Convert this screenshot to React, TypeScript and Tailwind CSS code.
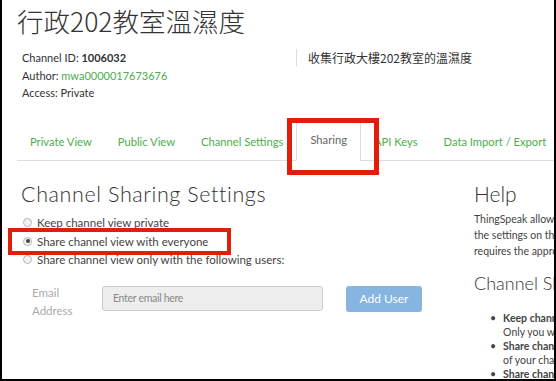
import { useState } from 'react'

const tabs = ['Private View', 'Public View', 'Channel Settings', 'Sharing', 'API Keys', 'Data Import / Export']

function Radio({ checked }: { checked?: boolean }) {
    return (
        <span className="inline-flex items-center justify-center w-[9px] h-[9px] rounded-full border border-[#b5b5b5] bg-[#f2f2f2] shrink-0">
            {checked && <span className="w-[4px] h-[4px] rounded-full bg-[#444]" />}
        </span>
    )
}

export default function App() {
    const [choice] = useState(1)
    const options = [
        'Keep channel view private',
        'Share channel view with everyone',
        'Share channel view only with the following users:',
    ]

    return (
        <div
            className="relative w-[556px] h-[381px] overflow-hidden bg-white border-x-2 border-b-2 border-black text-[#333]"
            style={{ fontFamily: 'Lato, "Noto Sans CJK TC", sans-serif' }}
        >
            <div className="pl-[15px]">
                <h1
                    className="mt-[5px] text-[26.5px] leading-[32px] font-light text-[#333]"
                    style={{ fontFamily: '"Noto Sans CJK TC", sans-serif' }}
                >
                    行政202教室溫濕度
                </h1>

                <div className="flex mt-[12px] text-[11px]">
                    <div className="w-[279px] shrink-0 pl-[5px] leading-[17.5px]">
                        <div>Channel ID: <b>1006032</b></div>
                        <div>Author: <span className="text-[#4cae4c]">mwa0000017673676</span></div>
                        <div>Access: Private</div>
                    </div>
                    <div
                        className="h-[17px] border-l border-[#ddd] pl-[11px] leading-[17px] text-[12px] whitespace-nowrap"
                        style={{ fontFamily: '"Noto Sans CJK TC", sans-serif' }}
                    >
                        收集行政大樓202教室的溫濕度
                    </div>
                </div>

                <div className="flex mt-[19px] border-b border-[#ddd] h-[40px] text-[11.2px]">
                    {tabs.map((t) => (
                        <div
                            key={t}
                            className={
                                t === 'Sharing'
                                    ? 'px-[13px] -mb-px flex items-center border border-[#ddd] border-b-white rounded-t-[4px] text-[#666] bg-white whitespace-nowrap shrink-0'
                                    : 'px-[13px] pt-[4px] flex items-center text-[#4cae4c] whitespace-nowrap shrink-0'
                            }
                        >
                            {t}
                        </div>
                    ))}
                </div>

                <div className="flex mt-[21px]">
                    <div className="w-[457px] shrink-0">
                        <h2 className="pl-[4px] text-[21.5px] leading-[24px] font-light tracking-[0.6px] text-[#333]">
                            Channel Sharing Settings
                        </h2>
                        <div className="mt-[8px] pl-[6px] text-[11.5px] text-[#444]">
                            {options.map((o, i) => (
                                <label key={o} className="flex items-center gap-[5px] h-[18.5px]">
                                    <Radio checked={i === choice} />
                                    <span>{o}</span>
                                </label>
                            ))}
                        </div>
                        <div className="flex items-start mt-[17px] pl-[15px] text-[11.5px]">
                            <div className="w-[70px] -mt-[2px] text-[#aaa] leading-[18px]">Email<br />Address</div>
                            <div className="w-[221px] h-[25px] rounded-[3px] border border-[#ccc] bg-[#eee] pl-[10px] flex items-center text-[10.5px] tracking-[-0.3px] text-[#888]">
                                Enter email here
                            </div>
                            <button className="ml-[23px] w-[76px] h-[26px] rounded-[3px] bg-[#85b5e0] text-white text-[12px]">
                                Add User
                            </button>
                        </div>
                    </div>

                    <div className="w-[120px] shrink-0 whitespace-nowrap">
                        <h2 className="text-[21px] leading-[24px] font-light text-[#333]">Help</h2>
                        <p className="mt-[5px] text-[10.5px] leading-[16px] text-[#444]">
                            ThingSpeak allows you to<br />
                            the settings on this page<br />
                            requires the approval
                        </p>
                        <h3 className="mt-[13px] text-[18px] leading-[22px] font-light text-[#333]">Channel Sharing</h3>
                        <ul className="mt-[17px] pl-[16px] text-[10.5px] leading-[14px] text-[#444]">
                            <li className="flex gap-[7px]"><span>•</span><div><b>Keep channel</b><br />Only you will</div></li>
                            <li className="flex gap-[7px]"><span>•</span><div><b>Share channel</b><br />of your channel</div></li>
                            <li className="flex gap-[7px]"><span>•</span><div><b>Share channel</b></div></li>
                        </ul>
                    </div>
                </div>
            </div>

            <div className="absolute left-[285px] top-[118px] w-[92px] h-[57px] border-[5px] border-[#e01e0a]" />
            <div className="absolute left-[6px] top-[228px] w-[223px] h-[27px] border-[4px] border-[#e01e0a]" />
        </div>
    )
}
